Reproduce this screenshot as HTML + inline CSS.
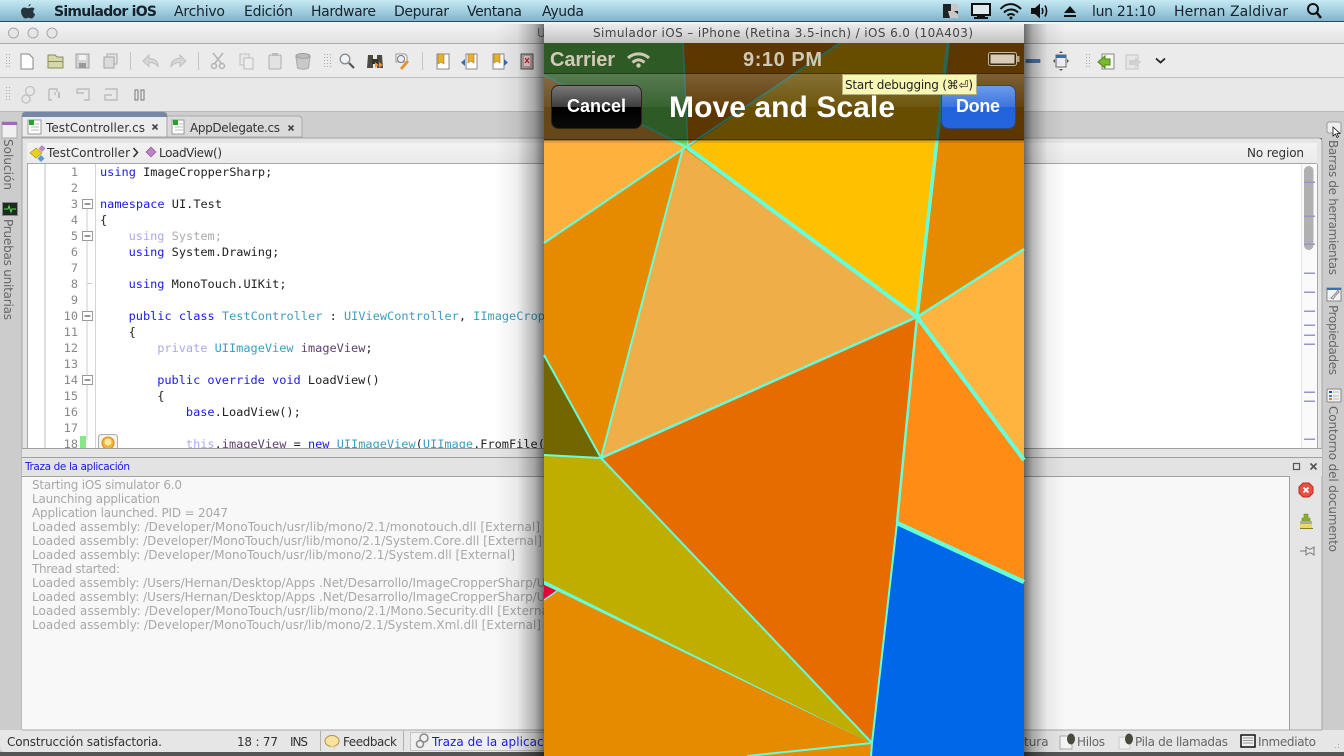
<!DOCTYPE html>
<html><head><meta charset="utf-8"><title>Simulador iOS</title>
<style>
html,body{margin:0;padding:0;width:1344px;height:756px;overflow:hidden;background:#444}
svg{display:block;filter:blur(.3px)}
text{font-family:"DejaVu Sans","Liberation Sans",sans-serif;white-space:pre}
.m{font-size:14px;fill:#16222c}
.c{font-family:"DejaVu Sans Mono","Liberation Mono",monospace;font-size:11.93px;fill:#222}
.n{font-family:"DejaVu Sans Mono","Liberation Mono",monospace;font-size:11.9px;fill:#888;text-anchor:end}
.k{fill:#1a1aee}.t{fill:#3f9dbd}.f{fill:#a9a9ee}.g{fill:#aaa}.v{fill:#5d3f6e}
.l{font-size:12px;fill:#a8a8a8}
.s{font-size:12px;fill:#333}
.d{font-size:12px;fill:#666}
.h{font-family:"Liberation Sans",Arial,sans-serif;font-weight:bold}
</style></head><body>
<svg xmlns="http://www.w3.org/2000/svg" width="1344" height="756" viewBox="0 0 1344 756">
<defs>
<linearGradient id="menu" x1="0" y1="0" x2="0" y2="1"><stop offset="0" stop-color="#c6e8f2"/><stop offset=".5" stop-color="#a2cfe0"/><stop offset="1" stop-color="#7fb0c8"/></linearGradient>
<linearGradient id="title" x1="0" y1="0" x2="0" y2="1"><stop offset="0" stop-color="#f4f4f4"/><stop offset="1" stop-color="#e2e2e2"/></linearGradient>
<linearGradient id="ptitle" x1="0" y1="0" x2="0" y2="1"><stop offset="0" stop-color="#ececec"/><stop offset="1" stop-color="#c2c2c2"/></linearGradient>
<linearGradient id="shl" x1="0" y1="0" x2="1" y2="0"><stop offset="0" stop-color="#000" stop-opacity="0"/><stop offset=".45" stop-color="#000" stop-opacity=".06"/><stop offset=".8" stop-color="#000" stop-opacity=".28"/><stop offset="1" stop-color="#000" stop-opacity=".55"/></linearGradient>
<linearGradient id="shr" x1="1" y1="0" x2="0" y2="0"><stop offset="0" stop-color="#000" stop-opacity="0"/><stop offset=".45" stop-color="#000" stop-opacity=".06"/><stop offset=".8" stop-color="#000" stop-opacity=".28"/><stop offset="1" stop-color="#000" stop-opacity=".55"/></linearGradient>
<linearGradient id="nav" x1="0" y1="0" x2="0" y2="1"><stop offset="0" stop-color="#fff" stop-opacity=".2"/><stop offset="1" stop-color="#fff" stop-opacity=".05"/></linearGradient>
<linearGradient id="cancel" x1="0" y1="0" x2="0" y2="1"><stop offset="0" stop-color="#7a7a7a"/><stop offset=".5" stop-color="#3c3c3c"/><stop offset=".5" stop-color="#000"/><stop offset="1" stop-color="#0a0a0a"/></linearGradient>
<linearGradient id="done" x1="0" y1="0" x2="0" y2="1"><stop offset="0" stop-color="#6f9cec"/><stop offset=".5" stop-color="#3b74dc"/><stop offset=".5" stop-color="#2262da"/><stop offset="1" stop-color="#2464de"/></linearGradient>
<linearGradient id="bc" x1="0" y1="0" x2="0" y2="1"><stop offset="0" stop-color="#f3f3f3"/><stop offset="1" stop-color="#eaeaea"/></linearGradient>
<pattern id="grip" width="3" height="3" patternUnits="userSpaceOnUse"><rect width="1" height="1" fill="#aaa"/></pattern>
</defs>

<!-- menu bar -->
<rect width="1344" height="22" fill="url(#menu)"/>
<rect y="21" width="1344" height="1" fill="#2c4a5e"/>
<path transform="translate(-2.500,0)" d="M31 6.500c1-.2 2-1 2.200-2.500-1.100.2-2.400 1.200-2.200 2.500zM27 7.500c1.300 0 2.200.8 3.800.8s2.300-.8 3.800-.8c1 0 2 .5 2.600 1.500-2.200 1.300-1.800 4.300.4 5.200-.7 2-2.100 4.300-3.600 4.300-1.100 0-1.600-.7-3-.7s-1.900.7-3 .7c-2 0-4.500-4-4.500-7 0-2.500 1.700-4 3.500-4z" fill="#26343e"/>
<text class="m" x="54" y="16" font-weight="bold" textLength="103">Simulador iOS</text>
<text class="m" x="174" y="16" textLength="51">Archivo</text>
<text class="m" x="244" y="16" textLength="49">Edición</text>
<text class="m" x="311" y="16" textLength="65">Hardware</text>
<text class="m" x="394" y="16" textLength="55">Depurar</text>
<text class="m" x="467" y="16" textLength="55">Ventana</text>
<text class="m" x="542" y="16" textLength="42">Ayuda</text>
<text class="m" x="1092" y="16" textLength="64">lun 21:10</text>
<text class="m" x="1174" y="16" textLength="114">Hernan Zaldivar</text>
<rect x="943" y="4" width="15" height="14" fill="#1c2228"/><path d="M951 4h7v7h-7zM948 11h6l4 3v4h-8z" fill="#c8c8c8"/>
<rect x="972" y="4" width="18" height="11" fill="#dfe9ee" stroke="#111" stroke-width="2"/><path d="M977 16h8v1h3v2h-14v-2h3z" fill="#111"/>
<g fill="none" stroke="#111" stroke-width="2"><path d="M1000.500 9c6-6.500 14-6.500 20.500 0"/><path d="M1004 12.500c4-4 10-4 14 0"/><path d="M1007.500 15.500c2-2 5-2 7 0"/></g><circle cx="1011" cy="18" r="1.500" fill="#111"/>
<path d="M1031 8h4l5-4.500v15l-5-4.500h-4z" fill="#111"/><g fill="none" stroke="#111" stroke-width="1.600"><path d="M1042 8c1 2 1 4 0 6"/><path d="M1045 5.500c2 3.500 2 7.500 0 11"/></g>
<path d="M1070 6l6 7h-12z" fill="#111"/><rect x="1064" y="15" width="12" height="2" fill="#111"/>
<circle cx="1313" cy="9" r="5" fill="none" stroke="#111" stroke-width="2"/><path d="M1317 13l4 5" stroke="#111" stroke-width="2.500"/>

<!-- IDE window -->
<rect y="22" width="1344" height="21" fill="url(#title)"/>
<rect y="43" width="1344" height="1" fill="#aaa"/>
<g fill="#e6e6e6" stroke="#a8a8a8"><circle cx="13.500" cy="33" r="5"/><circle cx="33" cy="33" r="5"/><circle cx="52" cy="33" r="5"/></g>
<text x="537" y="37" font-size="12" fill="#777">U</text>
<rect y="44" width="1344" height="33" fill="#ebebeb"/>
<rect y="77" width="1344" height="1" fill="#c0c0c0"/>
<rect y="78" width="1344" height="33" fill="#e8e8e8"/>
<rect y="111" width="1344" height="1" fill="#b8b8b8"/>
<rect y="112" width="1344" height="26" fill="#cecece"/>
<rect y="138" width="22" height="614" fill="#cccccc"/>
<rect x="1322" y="138" width="22" height="614" fill="#cccccc"/>

<!-- toolbar grips & seps -->
<rect x="5" y="53" width="7" height="16" fill="url(#grip)"/><rect x="324" y="53" width="7" height="16" fill="url(#grip)"/><rect x="1084" y="53" width="7" height="16" fill="url(#grip)"/><rect x="5" y="86" width="7" height="16" fill="url(#grip)"/>
<rect x="130" y="52" width="1" height="18" fill="#c4c4c4"/><rect x="198" y="52" width="1" height="18" fill="#c4c4c4"/><rect x="422" y="52" width="1" height="18" fill="#c4c4c4"/>

<!-- toolbar 1 icons -->
<path d="M21 54h8l4 4v11h-12z" fill="#fff" stroke="#888"/>
<path d="M48 55h7l2 2h6v11h-15z" fill="#d6d8a8" stroke="#8a8c60"/><rect x="48" y="61" width="15" height="1" fill="#8a8c60"/>
<path d="M76 54h13v14h-13z" fill="#d4d4d4" stroke="#a4a4a4"/><rect x="79" y="55" width="7" height="5" fill="#f2f2f2"/><rect x="79" y="63" width="7" height="5" fill="#999"/>
<path d="M107 54h10v10h-10z" fill="#e4e4e4" stroke="#aaa"/><path d="M104 57h10v11h-10z" fill="#dcdcdc" stroke="#a4a4a4"/>
<path d="M143 61l6-6v3.500c6 0 9 3 9 8-2-3-5-4-9-4v4z" fill="#d6d6d6" stroke="#c0c0c0"/>
<path d="M186 61l-6-6v3.500c-6 0-9 3-9 8 2-3 5-4 9-4v4z" fill="#d6d6d6" stroke="#c0c0c0"/>
<g fill="none" stroke="#b4b4b4" stroke-width="1.500"><path d="M213 53l8 10M223 53l-8 10"/><circle cx="214" cy="66" r="2.500"/><circle cx="222" cy="66" r="2.500"/></g>
<path d="M240 54h9v11h-9z" fill="#e8e8e8" stroke="#c0c0c0"/><path d="M244 58h9v11h-9z" fill="#eee" stroke="#bbb"/>
<rect x="269" y="55" width="12" height="14" rx="1" fill="#e2e2e2" stroke="#b0b0b0"/><rect x="272" y="53" width="6" height="3" fill="#bbb"/>
<ellipse cx="303" cy="56" rx="7" ry="2.500" fill="#bbb" stroke="#999"/><path d="M296 57l1.500 11c2 1.500 9 1.500 11 0l1.500-11c-3 2-11 2-14 0z" fill="#c8c8c8" stroke="#a8a8a8"/>
<circle cx="345" cy="59" r="4.800" fill="#eef3f7" stroke="#8a8a8a" stroke-width="1.300"/><path d="M349 63l5 5" stroke="#555" stroke-width="2.200"/>
<path d="M368 55h5v13h-6zM377 55h5l1 13h-6z" fill="#4c4a3e"/><rect x="372" y="59" width="6" height="5" fill="#333"/><path d="M375 62l3.500 3-3.500 3zM379 62l3.500 3-3.500 3z" fill="#e8a020"/>
<path d="M396 54h9l2 2v6h-11z" fill="#f4f4f4" stroke="#999"/><circle cx="401" cy="59" r="3.500" fill="#eef" stroke="#777"/><path d="M400 68l7-8 2 2-7 8z" fill="#e8902c"/>
<path d="M437 54h12v15h-12z" fill="#fff" stroke="#888"/><path d="M438 54h6v10l-3-2-3 2z" fill="#e8b030" stroke="#a87818" stroke-width=".6"/>
<path d="M466 54h11v15h-11z" fill="#fff" stroke="#888"/><path d="M468 54h6v9l-3-2-3 2z" fill="#e8b030" stroke="#a87818" stroke-width=".6"/><path d="M465 59v7l-4-3.500z" fill="#3a6cb0"/>
<path d="M493 54h11v15h-11z" fill="#fff" stroke="#888"/><path d="M494 54h6v9l-3-2-3 2z" fill="#e8b030" stroke="#a87818" stroke-width=".6"/><path d="M504 59v7l4-3.500z" fill="#3a6cb0"/>
<rect x="521" y="54" width="12" height="15" fill="#bca8a8" stroke="#555"/><rect x="524" y="56" width="6" height="10" fill="#f0e0e0"/><path d="M525 58l4 5M529 58l-4 5" stroke="#d02020" stroke-width="1.300"/>
<rect x="1026" y="59.500" width="14" height="3" fill="#4a78b0" stroke="#345a8c" stroke-width=".6"/>
<rect x="1056" y="55" width="10" height="12" fill="#f0f0f0" stroke="#666"/><rect x="1056" y="55" width="10" height="3" fill="#3c6cb4"/><path d="M1061 51l2 2h-4zM1061 71l2-2h-4zM1053 61l2-2v4zM1069 61l-2-2v4z" fill="#555"/>
<rect x="1102" y="54" width="12" height="15" fill="#f6f6f6" stroke="#888"/><path d="M1098 62l7-6v3h5v6h-5v3z" fill="#7cb830" stroke="#4a8a10"/>
<rect x="1126" y="55" width="12" height="14" fill="#e6e6e6" stroke="#c4c4c4"/><path d="M1141 62l-6-5v3h-6v5h6v3z" fill="#d0d0d0"/>
<path d="M1156 58.500l4.500 4 4.500-4" fill="none" stroke="#222" stroke-width="1.800"/>

<!-- toolbar 2 icons -->
<g fill="none" stroke="#c0c0c0" stroke-width="1.300"><circle cx="30" cy="91" r="4.500"/><circle cx="26" cy="99" r="4"/></g>
<path d="M49 89h8v3M49 89v11h3M55 92v3" fill="none" stroke="#bcbcbc" stroke-width="1.400"/><rect x="58" y="92" width="2" height="6" fill="#bcbcbc"/>
<path d="M77 89h12v11h-5M77 89v4h7" fill="none" stroke="#bcbcbc" stroke-width="1.400"/>
<path d="M105 89h12v11h-12v-5h7" fill="none" stroke="#bcbcbc" stroke-width="1.400"/>
<rect x="135" y="90" width="3" height="10" fill="none" stroke="#777"/><rect x="141" y="90" width="3" height="10" fill="none" stroke="#777"/>

<!-- tabs -->
<path d="M166 116h132q4 0 4 4v17h-136z" fill="#dadada" stroke="#aaa"/>
<path d="M22 137v-21q0-4 4-4h137q4 0 4 4v21z" fill="#ececec" stroke="#a4a4a4"/>
<path d="M22 117v-1q0-4 4-4h137q4 0 4 4v1z" fill="#7487a6"/>
<rect x="28" y="120" width="13" height="14" fill="#fff" stroke="#999"/><rect x="29" y="120" width="5" height="5" fill="#2aa02a"/>
<path d="M35 124h4M31 127h8M31 130h8" stroke="#bbb"/>
<text class="s" x="46" y="132" textLength="99" fill="#333">TestController.cs</text>
<path d="M152.500 124.500l5 5M157.500 124.500l-5 5" stroke="#444" stroke-width="1.600"/>
<rect x="172" y="120" width="12" height="14" fill="#fff" stroke="#999"/><rect x="173" y="120" width="5" height="5" fill="#2aa02a"/>
<path d="M179 124h4M175 127h8M175 130h8" stroke="#bbb"/>
<text class="s" x="190" y="132" textLength="90">AppDelegate.cs</text>
<path d="M288.500 125.500l5 5M293.500 125.500l-5 5" stroke="#444" stroke-width="1.600"/>

<!-- editor frame -->
<path d="M22 752V138h1296q4 0 4 4v610z" fill="#e5e5e5" stroke="#a8a8a8"/>
<rect x="27" y="143" width="1290" height="20" fill="url(#bc)"/>
<rect x="27" y="163" width="1290" height="1" fill="#a8a8a8"/>
<rect x="27" y="164" width="1290" height="284" fill="#fff"/>
<rect x="27" y="164" width="1" height="284" fill="#a8a8a8"/>
<rect x="1317" y="164" width="1" height="284" fill="#a8a8a8"/>
<path d="M36 148l6 5-6 5-6-5z" fill="#e8d020" stroke="#a89010" stroke-width=".6"/><path d="M42 145l3.500 3.500-3.500 3.500-3.500-3.500z" fill="#b888c8"/><path d="M41 155l3.500 3.500-3.500 3.500-3.500-3.500z" fill="#5a98d8"/>
<text class="s" x="47" y="157" textLength="83">TestController</text>
<path d="M133.500 148l4 4.500-4 4.500" fill="none" stroke="#333" stroke-width="1.600"/>
<path d="M151 147l5 5-5 5-5-5z" fill="#c080c8" stroke="#8a508e" stroke-width=".6"/>
<text class="s" x="159" y="157" textLength="63">LoadView()</text>
<text class="s" x="1247" y="157" textLength="57">No region</text>

<!-- gutter -->
<rect x="44" y="164" width="2" height="284" fill="#dedede"/>
<rect x="95" y="164" width="1" height="284" fill="#d4d4d4"/>
<path d="M87 209v231" stroke="#cfcfcf"/>
<g fill="#fff" stroke="#999"><rect x="82.500" y="199.500" width="10" height="9"/><rect x="82.500" y="231.500" width="10" height="9"/><rect x="82.500" y="311.500" width="10" height="9"/><rect x="82.500" y="375.500" width="10" height="9"/></g>
<g stroke="#333"><path d="M84.500 204h6M84.500 236h6M84.500 316h6M84.500 380h6"/></g>
<path d="M87 283.500h5" stroke="#ccc"/>
<rect x="80" y="436" width="6" height="12" fill="#88e888"/>
<rect x="98.500" y="434.500" width="19" height="18" rx="3" fill="#f4f4ec" stroke="#aaa"/><circle cx="108" cy="443" r="6" fill="#f4b43c" stroke="#d08820"/><circle cx="108" cy="442" r="3.500" fill="#fbe8a0"/>

<g>
<text class="n" x="78" y="176">1</text><text class="n" x="78" y="192">2</text><text class="n" x="78" y="208">3</text><text class="n" x="78" y="224">4</text><text class="n" x="78" y="240">5</text><text class="n" x="78" y="256">6</text><text class="n" x="78" y="272">7</text><text class="n" x="78" y="288">8</text><text class="n" x="78" y="304">9</text><text class="n" x="78" y="320">10</text><text class="n" x="78" y="336">11</text><text class="n" x="78" y="352">12</text><text class="n" x="78" y="368">13</text><text class="n" x="78" y="384">14</text><text class="n" x="78" y="400">15</text><text class="n" x="78" y="416">16</text><text class="n" x="78" y="432">17</text><text class="n" x="78" y="448">18</text>
</g>
<text class="c" x="100" y="176"><tspan class="k">using</tspan> ImageCropperSharp;</text>
<text class="c" x="100" y="208"><tspan class="k">namespace</tspan> UI.Test</text>
<text class="c" x="100" y="224">{</text>
<text class="c" x="128.600" y="240"><tspan class="f">using</tspan> <tspan class="g">System;</tspan></text>
<text class="c" x="128.600" y="256"><tspan class="k">using</tspan> System.Drawing;</text>
<text class="c" x="128.600" y="288"><tspan class="k">using</tspan> MonoTouch.UIKit;</text>
<text class="c" x="128.600" y="320"><tspan class="k">public class</tspan> <tspan class="t">TestController</tspan> : <tspan class="t">UIViewController</tspan>, <tspan class="t">IImageCropperDelegate</tspan></text>
<text class="c" x="128.600" y="336">{</text>
<text class="c" x="157.200" y="352"><tspan class="f">private</tspan> <tspan class="t">UIImageView</tspan> <tspan class="v">imageView</tspan>;</text>
<text class="c" x="157.200" y="384"><tspan class="k">public override void</tspan> LoadView()</text>
<text class="c" x="157.200" y="400">{</text>
<text class="c" x="185.900" y="416"><tspan class="k">base</tspan>.LoadView();</text>
<text class="c" x="185.900" y="448"><tspan class="f">this</tspan>.<tspan class="v">imageView</tspan> = <tspan class="k">new</tspan> <tspan class="t">UIImageView</tspan>(<tspan class="t">UIImage</tspan>.FromFile(</text>

<!-- scrollbar -->
<rect x="1301" y="164" width="16" height="284" fill="#fafafa"/><rect x="1301" y="164" width="1" height="284" fill="#e4e4e4"/>
<rect x="1304" y="166" width="9.500" height="84" rx="4.700" fill="#b0b0b0"/>
<g fill="#9696cc"><rect x="1304" y="181.500" width="11" height="1.500"/><rect x="1304" y="215.500" width="11" height="1.500"/><rect x="1304" y="243.500" width="11" height="1.500"/><rect x="1304" y="272.500" width="11" height="1.500"/><rect x="1304" y="291.500" width="11" height="1.500"/><rect x="1304" y="310.500" width="11" height="1.500"/><rect x="1304" y="324.500" width="11" height="1.500"/><rect x="1304" y="334.500" width="11" height="1.500"/><rect x="1304" y="343.500" width="11" height="1.500"/><rect x="1304" y="391.500" width="11" height="1.500"/><rect x="1304" y="400.500" width="11" height="1.500"/><rect x="1304" y="438.500" width="11" height="1.500"/></g>

<!-- splitter + pad -->
<rect x="22" y="448" width="1300" height="1" fill="#a0a0a0"/>
<rect x="22" y="449" width="1300" height="8" fill="#e6e6e6"/>
<rect x="22" y="457" width="1300" height="1" fill="#a0a0a0"/>
<rect x="22" y="458" width="1300" height="18" fill="#e3e3e3"/>
<text x="25" y="470" font-size="10.500" fill="#1a1aee" textLength="105">Traza de la aplicación</text>
<rect x="1293.500" y="463.500" width="6" height="6" fill="none" stroke="#555" stroke-width="1.200"/>
<path d="M1310.500 463.500l6 6M1316.500 463.500l-6 6" stroke="#555" stroke-width="1.700"/>
<rect x="22" y="476" width="1267.500" height="254" fill="#f8f8f8"/>
<path d="M22 476.500h1267.500V730" fill="none" stroke="#a0a0a0"/>
<path d="M1303 483h6l4 4v6l-4 4h-6l-4-4v-6z" fill="#e85040" stroke="#b83020"/><path d="M1303.500 487.500l5 5M1308.500 487.500l-5 5" stroke="#fff" stroke-width="1.800"/>
<path d="M1304 514h4v4h2v3h-8v-3h2z" fill="#8cae30" stroke="#6a8a20" stroke-width=".6"/><rect x="1300" y="521" width="12" height="3" fill="#aaa"/><rect x="1300" y="524" width="12" height="4" fill="#ecd868"/><rect x="1300" y="528" width="13" height="1" fill="#8a7a20"/>
<path d="M1300 551h6M1306 547v8l3-2h2l3 2v-8l-3 2h-2z" fill="#e8e8e8" stroke="#777"/>

<!-- log -->
<text class="l" x="32" y="489" textLength="150">Starting iOS simulator 6.0</text>
<text class="l" x="32" y="503" textLength="128">Launching application</text>
<text class="l" x="32" y="517" textLength="196">Application launched. PID = 2047</text>
<text class="l" x="32" y="531" textLength="508">Loaded assembly: /Developer/MonoTouch/usr/lib/mono/2.1/monotouch.dll [External]</text>
<text class="l" x="32" y="545" textLength="510">Loaded assembly: /Developer/MonoTouch/usr/lib/mono/2.1/System.Core.dll [External]</text>
<text class="l" x="32" y="559" textLength="483">Loaded assembly: /Developer/MonoTouch/usr/lib/mono/2.1/System.dll [External]</text>
<text class="l" x="32" y="573" textLength="88">Thread started:</text>
<text class="l" x="32" y="587" textLength="517">Loaded assembly: /Users/Hernan/Desktop/Apps .Net/Desarrollo/ImageCropperSharp/UI</text>
<text class="l" x="32" y="601" textLength="517">Loaded assembly: /Users/Hernan/Desktop/Apps .Net/Desarrollo/ImageCropperSharp/UI</text>
<text class="l" x="32" y="615" textLength="525">Loaded assembly: /Developer/MonoTouch/usr/lib/mono/2.1/Mono.Security.dll [External]</text>
<text class="l" x="32" y="629" textLength="509">Loaded assembly: /Developer/MonoTouch/usr/lib/mono/2.1/System.Xml.dll [External]</text>

<!-- status bar -->
<path d="M0 730h1344v22H6q-6 0-6-6z" fill="#e6e6e6"/>
<rect x="22" y="729.500" width="1300" height="1" fill="#a8a8a8"/>
<rect x="0" y="752" width="1344" height="4" fill="#555"/>
<text class="s" x="7" y="746" textLength="155">Construcción satisfactoria.</text>
<text class="s" x="237" y="746" textLength="41">18 : 77</text>
<text class="s" x="290" y="746" textLength="18">INS</text>
<rect x="320" y="731" width="1" height="20" fill="#b0b0b0"/>
<ellipse cx="332" cy="741" rx="7" ry="5.500" fill="#f8e4a0" stroke="#b09040"/><path d="M330 746l5 3 0-3z" fill="#e8d080"/>
<text class="s" x="343" y="746" textLength="54">Feedback</text>
<rect x="403" y="731" width="1" height="20" fill="#b0b0b0"/>
<rect x="410.500" y="732.500" width="150" height="18" fill="#f0f0f0" stroke="#c4c4c4"/>
<circle cx="424" cy="738" r="4" fill="none" stroke="#888" stroke-width="1.500"/><circle cx="420" cy="744" r="3.500" fill="none" stroke="#888" stroke-width="1.500"/>
<text x="432" y="746" font-size="12" fill="#1a1aee" textLength="130">Traza de la aplicación</text>
<text class="d" x="1024" y="746">tura</text>
<rect x="1060" y="736" width="12" height="13" fill="#f4f4f4" stroke="#aaa"/><ellipse cx="1071" cy="739" rx="4" ry="5.500" fill="#4a4a3a"/>
<text class="d" x="1077" y="746" textLength="28">Hilos</text>
<rect x="1119" y="737" width="11" height="12" fill="#efefef" stroke="#ccc"/><ellipse cx="1129" cy="739" rx="4" ry="5.500" fill="#4a4a3a"/>
<text class="d" x="1135" y="746" textLength="93">Pila de llamadas</text>
<rect x="1241" y="735" width="14" height="12" fill="#f0f0f0" stroke="#111" stroke-width="1.500"/><path d="M1243 738h10M1243 740.500h10M1243 743h10" stroke="#999"/>
<text class="d" x="1258" y="746" textLength="58">Inmediato</text>
<path d="M1331 750l10-10v10z" fill="url(#grip)"/>

<!-- sidebars -->
<rect x="2" y="122" width="15" height="16" fill="#f0f0f0" stroke="#aaa"/><rect x="2" y="122" width="15" height="3" fill="#a06ab0"/>
<text class="d" transform="translate(4,139) rotate(90)" textLength="51">Solución</text>
<rect x="2.500" y="202.500" width="15" height="13" fill="#1d2a1d" stroke="#888"/><path d="M4 209h4l1-3 2 6 1-3h4" fill="none" stroke="#50e050"/>
<text class="d" transform="translate(4,219) rotate(90)" textLength="101">Pruebas unitarias</text>
<rect x="1327" y="122" width="14" height="11" rx="2" fill="#eee" stroke="#999"/>
<text class="d" transform="translate(1329,140) rotate(90)" textLength="135">Barras de herramientas</text>
<rect x="1327" y="288" width="14" height="13" fill="#f2f2f2" stroke="#888"/><rect x="1327" y="288" width="14" height="2" fill="#3c6cb0"/><path d="M1331 298l5-5 2-3 1 2-2 2-4 5z" fill="none" stroke="#888"/>
<text class="d" transform="translate(1329,305) rotate(90)" textLength="70">Propiedades</text>
<rect x="1327" y="389" width="14" height="13" rx="1" fill="#f0f0f0" stroke="#888"/><rect x="1329" y="391" width="3" height="2" fill="#447"/><rect x="1329" y="395" width="3" height="2" fill="#38c"/><rect x="1329" y="398" width="3" height="2" fill="#d82"/><path d="M1333 392h6M1333 396h6M1333 399h6" stroke="#bbb"/>
<text class="d" transform="translate(1329,406) rotate(90)" textLength="146">Contorno del documento</text>
<path d="M1333 127v9l2.500-2 1.500 3.500 1.500-.7-1.500-3.300h3z" fill="#fff" stroke="#111" stroke-width=".8"/>

<!-- phone shadow -->
<rect x="495" y="24" width="49" height="732" fill="url(#shl)"/>
<rect x="1024" y="24" width="42" height="732" fill="url(#shr)"/>

<!-- phone -->
<svg x="544" y="43" width="480" height="713" viewBox="544 43 480 713">
<rect x="544" y="43" width="480" height="713" fill="#e68a00"/>
<polygon points="544,75 688,148 683,148 544,243" fill="#ffb13d"/>
<polygon points="544,43 683,43 688,148 544,75" fill="#74e060"/>
<polygon points="840,43 948,43 917,317 688,148" fill="#ffc000"/>
<polygon points="917,317 1024,249 1024,460" fill="#ffb440"/>
<polygon points="917,317 1024,460 1024,582 897,523" fill="#ff8c14"/>
<polygon points="897,523 1024,582 1024,756 871,756 872,743" fill="#0068e8"/>
<polygon points="917,317 897,523 872,743 601,458" fill="#e66c00"/>
<polygon points="683,148 917,317 601,458" fill="#efae48"/>
<polygon points="544,355 601,458 544,455" fill="#736600"/>
<polygon points="544,455 601,458 872,743 544,582" fill="#bfae00"/>
<polygon points="544,585 557,591 544,600" fill="#e4003a"/>
<g fill="none" stroke="#66ffdc">
<path d="M917 317L948 43" stroke-width="3.500"/>
<path d="M917 317L688 148" stroke-width="4"/>
<path d="M544 243L840 43" stroke-width="2"/>
<path d="M683 148L601 458" stroke-width="2"/>
<path d="M917 317L601 458" stroke-width="2.500"/>
<path d="M917 317L1024 249" stroke-width="2.500"/>
<path d="M917 317L1024 460" stroke-width="4"/>
<path d="M917 317L897 523" stroke-width="2.500"/>
<path d="M897 523L1024 582" stroke-width="4.500"/>
<path d="M897 523L872 743L871 756" stroke-width="2"/>
<path d="M872 743L601 458" stroke-width="2"/>
<path d="M872 743L747 756" stroke-width="2"/>
<path d="M601 458L544 455" stroke-width="2"/>
<path d="M601 458L544 355" stroke-width="2"/>
<path d="M683 43L688 148" stroke-width="1.500"/>
<path d="M544 75L688 148" stroke-width="2"/>
<path d="M557 591L544 600" stroke-width="1.500"/>
</g>
<polygon points="872,743.500 544,580.500 544,584.500" fill="#66ffdc"/>
<rect x="544" y="43" width="480" height="97" fill="#000" fill-opacity=".6"/>
<rect x="544" y="74" width="480" height="33" fill="url(#nav)"/>
<rect x="544" y="73" width="480" height="1" fill="#000" fill-opacity=".3"/>
<rect x="544" y="139" width="480" height="2" fill="#000" fill-opacity=".35"/>
<rect x="544" y="141" width="480" height="2" fill="#000" fill-opacity=".1"/>
<rect x="551.500" y="85.500" width="90" height="43" rx="7" fill="url(#cancel)" stroke="#2c2418"/>
<rect x="941.500" y="85.500" width="74" height="43" rx="7" fill="url(#done)" stroke="#2a4a80"/>
<text class="h" x="550" y="66" font-size="20" fill="#cfc9b6" textLength="65">Carrier</text>
<g fill="none" stroke="#cfc9b6" stroke-width="3"><path d="M628 58c6-5.500 15-5.500 21 0"/><path d="M632.500 62.500c4-3.500 8-3.500 12 0"/></g><circle cx="638.500" cy="65.500" r="2.200" fill="#cfc9b6"/>
<text class="h" x="743" y="66" font-size="20" fill="#cfc9b6" textLength="79">9:10 PM</text>
<rect x="988.500" y="52.500" width="28" height="13" rx="2" fill="#3c2a10" stroke="#c4b89e"/><rect x="990.500" y="54.500" width="24" height="9" fill="#d8ccb8"/><rect x="1017" y="56" width="2.500" height="6" fill="#b8a888"/>
<text class="h" x="567" y="112" font-size="18" fill="#fff" textLength="59">Cancel</text>
<text class="h" x="669" y="117" font-size="30" fill="#fff" textLength="226">Move and Scale</text>
<text class="h" x="956" y="112" font-size="18" fill="#fff" textLength="44">Done</text>
</svg>
<path d="M544 43v-15q0-4 4-4h472q4 0 4 4v15z" fill="url(#ptitle)"/>
<text x="593" y="37" font-size="12" fill="#444" textLength="380">Simulador iOS – iPhone (Retina 3.5-inch) / iOS 6.0 (10A403)</text>
<rect x="842.500" y="74.500" width="134" height="20" fill="#f8f8b4" stroke="#b0b080"/>
<text x="845" y="89" font-size="12" fill="#222" textLength="128">Start debugging (⌘⏎)</text>
</svg>
</body></html>
